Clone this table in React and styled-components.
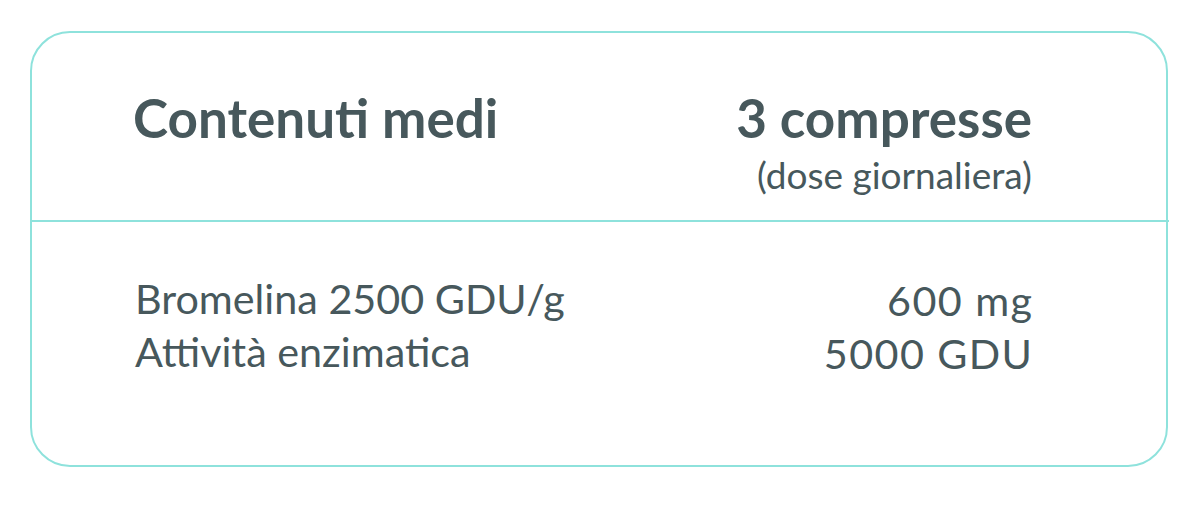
import React from "react";
import styled, { createGlobalStyle } from "styled-components";

const GlobalStyle = createGlobalStyle`
  html, body {
    margin: 0;
    padding: 0;
    background: #ffffff;
  }
  body {
    font-family: Lato, "Open Sans", sans-serif;
    color: #47585c;
  }
`;

const Page = styled.div`
  padding: 31px 32px 0 30px;
`;

const Card = styled.section`
  width: 1138px;
  height: 436px;
  box-sizing: border-box;
  border: 2px solid #8ee2dc;
  border-radius: 40px;
  display: flex;
  flex-direction: column;
`;

const Head = styled.header`
  display: grid;
  grid-template-columns: 1fr auto;
  padding: 53px 137px 0 101px;
  margin-right: -3px;
  border-bottom: 2px solid #8ee2dc;
  height: 189px;
  box-sizing: border-box;
`;

const Title = styled.h2`
  margin: 0;
  font-size: 53px;
  font-weight: 700;
  line-height: 1.2;
  text-align: ${(p) => (p.$right ? "right" : "left")};
`;

const Sub = styled.div`
  margin-top: 3px;
  font-size: 37px;
  font-weight: 400;
  line-height: 1.2;
  text-align: right;
`;

const Body = styled.div`
  display: grid;
  grid-template-columns: 1fr auto;
  padding: 50px 134px 0 103px;
`;

const Col = styled.div`
  font-size: 41.3px;
  line-height: 53px;
  text-align: ${(p) => (p.$right ? "right" : "left")};
  letter-spacing: ${(p) => (p.$right ? "1.4px" : "0")};
  padding-top: ${(p) => (p.$right ? "2px" : "0")};
  margin-right: ${(p) => (p.$right ? "-1.4px" : "0")};
`;

export default function App() {
  return (
    <>
      <GlobalStyle />
      <Page>
        <Card>
          <Head>
            <Title>Contenuti medi</Title>
            <div>
              <Title $right>3 compresse</Title>
              <Sub>(dose giornaliera)</Sub>
            </div>
          </Head>
          <Body>
            <Col>
              Bromelina 2500 GDU/g
              <br />
              Attività enzimatica
            </Col>
            <Col $right>
              600 mg
              <br />
              5000 GDU
            </Col>
          </Body>
        </Card>
      </Page>
    </>
  );
}
